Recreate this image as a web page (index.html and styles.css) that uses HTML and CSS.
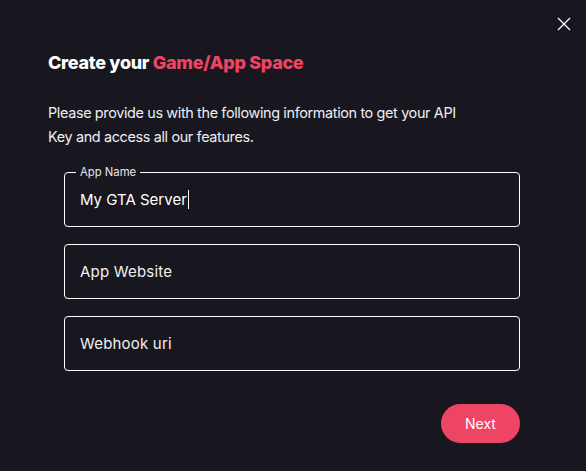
FILE: index.html
```html
<!DOCTYPE html>
<html>
<head>
<meta charset="utf-8">
<link rel="stylesheet" href="styles.css">
</head>
<body>
<div class="modal">
  <button class="close" aria-label="Close">
    <svg width="14" height="14" viewBox="0 0 14 14"><path d="M1 1L13 13M13 1L1 13" stroke="#fff" stroke-width="1.3" fill="none"/></svg>
  </button>
  <h1 class="title">Create your <span class="accent">Game/App Space</span></h1>
  <p class="intro">Please provide us with the following information to get your API Key and access all our features.</p>
  <form class="form">
    <div class="field active">
      <span class="label">App Name</span>
      <span class="value">My GTA Server</span><span class="caret"></span>
    </div>
    <div class="field"><span class="placeholder">App Website</span></div>
    <div class="field"><span class="placeholder">Webhook uri</span></div>
    <div class="actions"><button type="button" class="next">Next</button></div>
  </form>
</div>
</body>
</html>
```
FILE: styles.css
```css
html, body { margin: 0; padding: 0; }
body {
  background: #18171f;
  width: 586px;
  height: 471px;
  overflow: hidden;
  font-family: Inter, "Noto Sans", sans-serif;
  color: #fff;
}
.modal {
  position: relative;
  padding: 52px 48px 0 48px;
}
.close {
  position: absolute;
  top: 17px;
  right: 15px;
  width: 14px;
  height: 14px;
  padding: 0;
  border: 0;
  background: none;
  display: block;
}
.close svg { display: block; }
.title {
  margin: 0;
  font-size: 18px;
  font-weight: 800;
  line-height: 22px;
  letter-spacing: -0.3px;
}
.accent { color: #ef4565; }
.intro {
  margin: 27px 0 0 0;
  font-size: 14.4px;
  letter-spacing: -0.35px;
  line-height: 24px;
  color: #eeeef2;
  width: 425px;
}
.form {
  margin: 23px 0 0 16px;
  width: 456px;
  display: flex;
  flex-direction: column;
  gap: 17px;
}
.field {
  position: relative;
  box-sizing: border-box;
  height: 55px;
  border: 1px solid #fff;
  border-radius: 4px;
  display: flex;
  align-items: center;
  padding: 0 15px;
  font-size: 15px;
  color: #f0f0f0;
}
.label {
  position: absolute;
  top: -7px;
  left: 11px;
  font-size: 11.3px;
  line-height: 12px;
  padding: 0 4px;
  background: #18171f;
  color: #e6e6ea;
}
.value { color: #fff; }
.caret {
  display: inline-block;
  width: 1px;
  height: 19px;
  background: #fff;
  margin-left: 1px;
}
.placeholder { color: #f0f0f2; letter-spacing: 0.2px; }
.actions {
  display: flex;
  justify-content: flex-end;
  margin-top: 16px;
}
.next {
  width: 79px;
  height: 39px;
  border: 0;
  border-radius: 20px;
  background: #ef4565;
  color: #fff;
  font-family: Inter, "Noto Sans", sans-serif;
  font-size: 14px;
}
```
